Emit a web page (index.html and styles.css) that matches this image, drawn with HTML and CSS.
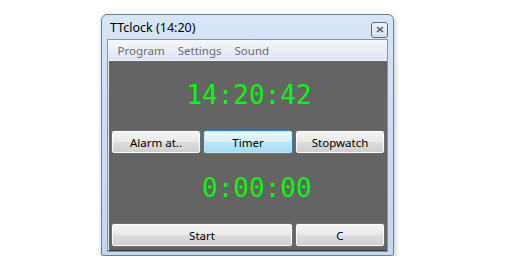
FILE: index.html
```html
<!DOCTYPE html>
<html lang="en">
<head>
    <meta charset="UTF-8">
    <title>TTclock (14:20)</title>
    <link rel="stylesheet" href="styles.css">
</head>
<body>
    <div class="window">
        <div class="title-bar">
            <span class="title">TTclock (14:20)</span>
            <div class="close-btn">
                <svg width="8" height="7" viewBox="0 0 8 7">
                    <path d="M1 1 L7 6 M7 1 L1 6" stroke="#4a5a6e" stroke-width="1.6"/>
                </svg>
            </div>
        </div>
        <div class="frame">
            <div class="menu-bar">
                <span class="menu-item">Program</span>
                <span class="menu-item">Settings</span>
                <span class="menu-item">Sound</span>
            </div>
            <div class="content">
                <div class="display">14:20:42</div>
                <div class="button-row">
                    <div class="btn">Alarm at..</div>
                    <div class="btn active">Timer</div>
                    <div class="btn">Stopwatch</div>
                </div>
                <div class="display second">0:00:00</div>
                <div class="button-row">
                    <div class="btn wide">Start</div>
                    <div class="btn">C</div>
                </div>
            </div>
        </div>
    </div>
</body>
</html>
```

FILE: styles.css
```css
body {
    margin: 0;
    background: #ffffff;
    font-family: 'Noto Sans', 'Open Sans', sans-serif;
    font-size: 12px;
}
.window {
    margin: 14px 0 0 101px;
    width: 291px;
    height: 240px;
    border: 1px solid #6f8196;
    border-radius: 6px 6px 2px 2px;
    background: linear-gradient(#d6e5f7, #c3d7ef);
    box-shadow: 1px 2px 5px rgba(0, 0, 0, 0.25);
    display: flex;
    flex-direction: column;
}
.title-bar {
    height: 24px;
    display: flex;
    align-items: center;
    justify-content: space-between;
    padding: 0 5px 0 8px;
}
.title {
    font-size: 12.5px;
    color: #000;
    margin-top: 1px;
}
.close-btn {
    width: 15px;
    height: 14px;
    border: 1px solid #5b6b80;
    border-radius: 3px;
    background: linear-gradient(#eef4fb, #d5e2f1);
    display: flex;
    justify-content: center;
    align-items: center;
    margin-top: 5px;
}
.frame {
    margin: 0 5px 0 5px;
    border: 1px solid #8295ab;
    display: flex;
    flex-direction: column;
}
.menu-bar {
    height: 20px;
    display: flex;
    align-items: center;
    padding-left: 3px;
    background: linear-gradient(#f6f7fc, #dfe4f3);
    border-bottom: 1px solid #f4f4f4;
    font-size: 11.5px;
}
.menu-item {
    color: #6d6d6d;
    padding: 0 6.5px;
}
.content {
    background: #646464;
    border-left: 1px solid #e6e6e6;
    border-bottom: 1px solid #3a3a3a;
    padding-bottom: 2px;
}
.display {
    height: 67px;
    display: flex;
    justify-content: center;
    align-items: center;
    font-family: 'DejaVu Sans Mono', monospace;
    font-size: 26px;
    color: #0cf80c;
    padding-left: 2px;
}
/* timer text is padded to the clock's width, so it sits to the right */
.display.second {
    height: 66px;
    padding-left: calc(1ch + 2px);
}
.button-row {
    display: grid;
    grid-template-columns: repeat(3, 1fr);
    gap: 2px;
    padding: 2px 2px 1px 2px;
}
.btn {
    height: 22px;
    border: 1px solid #707070;
    border-radius: 3px;
    background: linear-gradient(#f3f3f3 0%, #ebebeb 48%, #dddddd 52%, #cfcfcf 100%);
    box-shadow: inset 0 0 0 1px #fbfbfb;
    display: flex;
    justify-content: center;
    align-items: center;
    color: #000;
    font-size: 11.5px;
}
.btn.wide {
    grid-column: span 2;
}
.btn.active {
    border-color: #3c7fb1;
    background: linear-gradient(#eaf6fd 0%, #d9f0fc 48%, #bee6fd 52%, #a7d9f5 100%);
    box-shadow: inset 0 0 0 1px #c4e5f6;
}
```
